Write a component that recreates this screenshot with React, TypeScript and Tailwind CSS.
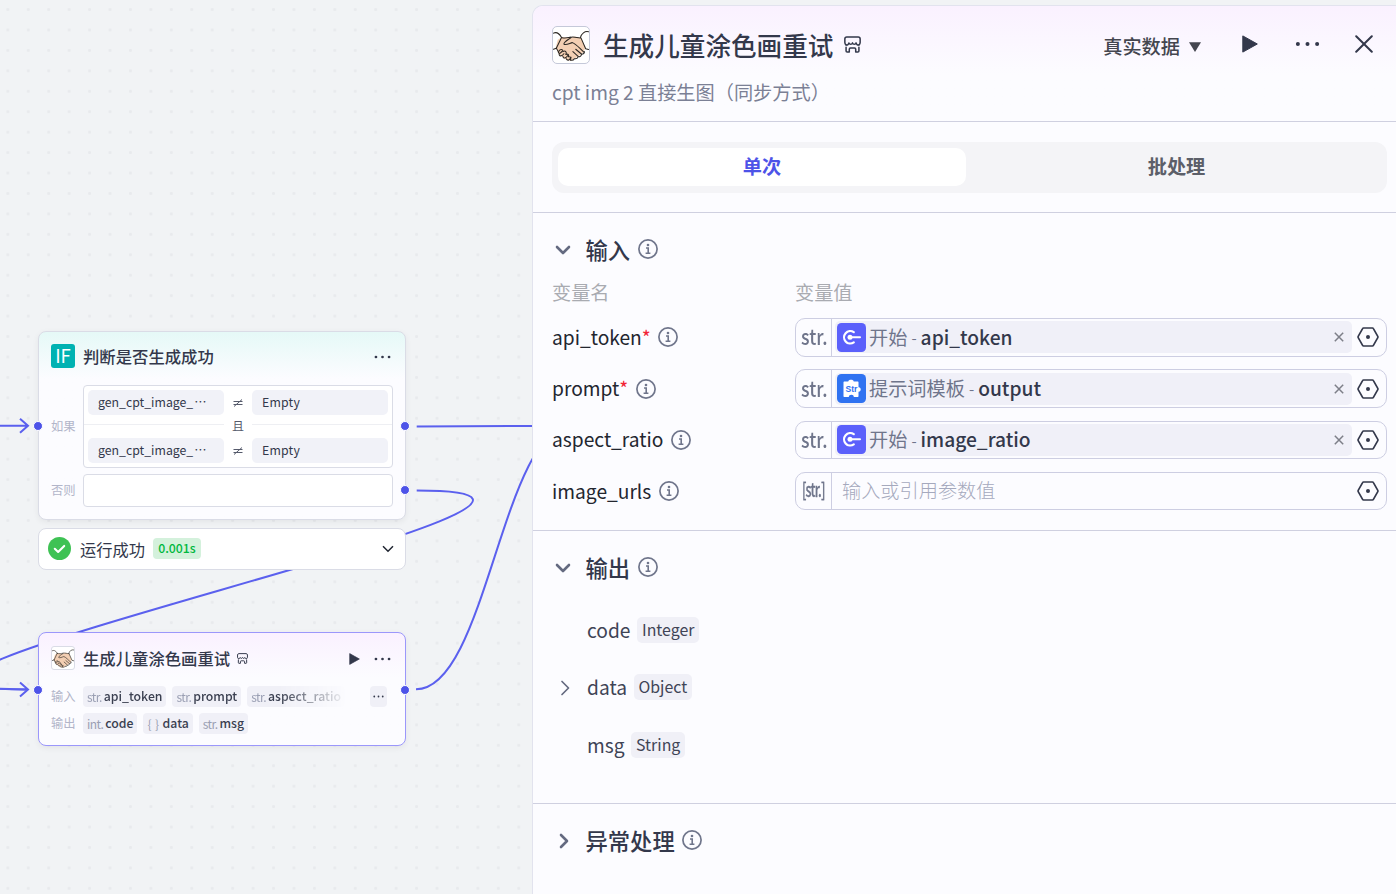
import type { ReactNode } from "react";
import clsx from "clsx";

type Param = {
  name: string;
  type: string;
  required?: boolean;
  source?: "start" | "template";
  sourceLabel?: string;
  field?: string;
};

const params: Param[] = [
  { name: "api_token", type: "str.", required: true, source: "start", sourceLabel: "开始", field: "api_token" },
  { name: "prompt", type: "str.", required: true, source: "template", sourceLabel: "提示词模板", field: "output" },
  { name: "aspect_ratio", type: "str.", source: "start", sourceLabel: "开始", field: "image_ratio" },
  { name: "image_urls", type: "[str.]" },
];

const outputs = [
  { name: "code", type: "Integer" },
  { name: "data", type: "Object", expandable: true },
  { name: "msg", type: "String" },
];

function HandshakeIcon({ className }: { className?: string }) {
  return (
    <svg viewBox="0 0 38 38" className={className} fill="none" strokeLinejoin="round" strokeLinecap="round">
      <path d="M5 13.500 10 10.500l8 1.500 4.500-2 7 1.500 4.500 10-1.500 4.500L26 31.500l-7.500 4-4.500-1-8-6-3-7z" fill="#f3cfb3" />
      <g stroke="#2b2723" strokeWidth="1.100">
        <path d="M.5 6.500c4-2 6.500 1 8.500 4.500M9 11 3.500 22.500l-3 1M37.500 5c-4-1-7.500 2-8.500 6M29.500 11.500l5 11.500 3 .8" />
        <path d="M9 11c4 1.500 7 0 10-.3 4-.8 7 1 10 .8" />
        <path d="M19 11.200c-3 2.300-7.500 4.500-7.500 6.800 2 1.700 6-.8 9-1.500 4 1.500 7 5.500 12 10" />
        <path d="M3.500 22c.5 2 2 3 2.300 5 1.300 1.500 2.700 0 4-1.500M6.500 28c-.3 3 2.500 3.500 5 .2M10.500 31c.5 3 3.500 2 5-.8M14 33.500c1.500 3 4 .8 5-1.500" />
        <path d="M6 26c.8-2.500 4.500-3.500 4.500 0 2.500-1.500 4.500.2 3 3 2-1 4 .3 2.500 2.500 2-.5 3.500.5 2.500 3" />
        <path d="M18.500 35c2 .5 3.500-.5 4-1.500 2 .3 3.500-.5 4-2 2.500 0 3.500-1 3.500-2.700 2.500 0 3.500-1.300 3-3" />
        <path d="m21 26 5.500 5M24 23.500l6 5" />
      </g>
    </svg>
  );
}

function StoreIcon({ className }: { className?: string }) {
  return (
    <svg viewBox="0 0 18 18" className={className} fill="none" stroke="currentColor" strokeWidth="1.600" strokeLinecap="round" strokeLinejoin="round">
      <path d="M2.200 9.500C1.400 9 .9 8.200.9 7V3.200C.9 1.900 1.700 1 3 1h12c1.300 0 2.100.9 2.100 2.200V7c0 1.200-.5 2-1.300 2.500" />
      <path d="M2.200 9.500c1.500.5 2.700-.6 3-2.200.6 2 3.200 2 3.800 0 .6 2 3.200 2 3.800 0 .3 1.600 1.500 2.700 3 2.200" />
      <path d="M2.200 11.800v4c0 .7.400 1.100 1.100 1.100h2.300V14c0-.8.400-1.200 1.200-1.200h4.400c.8 0 1.200.4 1.200 1.200v2.900h2.300c.7 0 1.100-.4 1.100-1.100v-4" />
    </svg>
  );
}

function InfoIcon() {
  return (
    <svg viewBox="0 0 20 20" className="size-5 shrink-0 text-[#6f758b]" fill="none" stroke="currentColor" strokeWidth="1.700">
      <circle cx="10" cy="10" r="9.100" />
      <circle cx="10" cy="6" r="1.300" fill="currentColor" stroke="none" />
      <path d="M8 9h2.200v5M7.600 14.200h4.800" strokeWidth="1.600" />
    </svg>
  );
}

function Chevron({ open, thin }: { open?: boolean; thin?: boolean }) {
  return (
    <svg
      viewBox="0 0 16 16"
      className={clsx("size-4 shrink-0 text-[#646a80]", open && "-mt-[2px] rotate-90", !open && !thin && "-mt-px")}
      fill="none"
      stroke="currentColor"
      strokeWidth={thin ? 1.7 : 2.6}
      strokeLinecap="round"
      strokeLinejoin="round"
    >
      <path d={thin ? "m6 1.500 6.500 6.500L6 14.500" : "m6 2 6 6-6 6"} />
    </svg>
  );
}

function Dots({ className }: { className?: string }) {
  return (
    <svg viewBox="0 0 26 6" className={className} fill="currentColor">
      <circle cx="3" cy="3" r="2.100" />
      <circle cx="13" cy="3" r="2.100" />
      <circle cx="23" cy="3" r="2.100" />
    </svg>
  );
}

function PlayIcon({ className }: { className?: string }) {
  return (
    <svg viewBox="0 0 16 18" className={className} fill="currentColor" stroke="currentColor" strokeLinejoin="round">
      <path d="M.8.9v16.200L15.300 9z" />
    </svg>
  );
}

function HexIcon() {
  return (
    <svg viewBox="0 0 22 20" className="h-5 w-[22px] shrink-0 text-[#33384b]" fill="none" stroke="currentColor" strokeWidth="1.700" strokeLinejoin="round">
      <path d="M6.600 1h8.800c.5 0 .8.200 1 .6l4.400 7.700c.2.500.2.900 0 1.400l-4.400 7.700c-.2.400-.5.600-1 .6H6.600c-.5 0-.8-.2-1-.6L1.200 10.700c-.2-.5-.2-.9 0-1.400l4.400-7.700c.2-.4.5-.6 1-.6Z" />
      <circle cx="11" cy="10" r="2" fill="currentColor" stroke="none" />
    </svg>
  );
}

function SourceIcon({ source }: { source: "start" | "template" }) {
  if (source === "start") {
    return (
      <svg viewBox="0 0 29 29" className="size-[29px] shrink-0" fill="none">
        <rect width="29" height="29" rx="4.500" fill="#5b60fb" />
        <path d="M16.800 9.200a6.200 6.200 0 1 0 0 10.200" stroke="#fff" strokeWidth="2.200" strokeLinecap="round" />
        <path d="M14 14.300h9" stroke="#fff" strokeWidth="2" strokeLinecap="round" />
        <circle cx="13" cy="14.300" r="2.500" fill="#fff" />
      </svg>
    );
  }
  return (
    <svg viewBox="0 0 29 29" className="size-[29px] shrink-0" fill="none">
      <rect width="29" height="29" rx="4.500" fill="#2f72f1" />
      <path
        d="M7.500 7.500h3.800c-.3-2.400 5.700-2.400 5.400 0h3.800c.8 0 1 .3 1 1v4.700c3-.3 3 4.700 0 4.500v4.200c0 .8-.3 1-1 1h-3.700c.2-3-5-3-5 0H7.500c-.7 0-1-.3-1-1V8.500c0-.7.3-1 1-1Z"
        fill="#fff"
      />
      <text x="14.500" y="18.300" textAnchor="middle" fontSize="8.500" fontWeight="700" fontFamily="Liberation Sans, sans-serif" fill="#2f72f1">
        Str
      </text>
    </svg>
  );
}

function Port({ className }: { className: string }) {
  return <span className={clsx("absolute size-[10px] rounded-full border border-white bg-[#4d53e8]", className)} />;
}

function Tag({ type, name }: { type: string; name: string }) {
  return (
    <span className="flex h-[21px] shrink-0 items-center gap-[2px] rounded-[4px] bg-[#f0f0f7] px-1 text-[12.27px] font-medium text-[#3a3f50]">
      <span className="whitespace-pre text-[12px] font-normal tracking-[-0.6px] text-[#9a9fb3]">{type}</span>
      {name}
    </span>
  );
}

function ConditionRow() {
  return (
    <div className="flex h-[25px] items-center text-[12.3px] text-[#33384b]">
      <span className="flex h-full w-[136px] items-center rounded-[5px] bg-[#f1f2f8] pl-[10px]">
        gen_cpt_image_<span className="ml-px">…</span>
      </span>
      <span className="flex w-7 justify-center">
        <svg viewBox="0 0 10 8" className="h-2 w-[10px]" fill="none" stroke="#555a6b" strokeWidth="1">
          <path d="M.5 2.500h9M.5 5.500h9M1 7.500l8-7" />
        </svg>
      </span>
      <span className="flex h-full w-[136px] items-center rounded-[5px] bg-[#f1f2f8] pl-[10px]">
        <span className="tracking-[0.2px]">Empty</span>
      </span>
    </div>
  );
}

function Edges() {
  return (
    <svg width="532" height="894" viewBox="0 0 532 894" className="absolute inset-0" fill="none" stroke="#5b60ee" strokeWidth="2">
      <path d="M0 425.700H27.500M20 418.800l8 7-8 7" />
      <path d="M0 688.700 27.500 689.500M20 682.500l8 7-8 7" />
      <path d="M416.700 426.600 573 425.700" />
      <path d="M416.700 490.500C713 490.500-271 689.500 25 689.500" />
      <path d="M416 689.300C487 689.300 502 425 573 425" />
    </svg>
  );
}

function IfNode() {
  return (
    <div className="absolute left-[38px] top-[331px] w-[368px]">
      <div className="h-[189px] rounded-[8px] border border-[#dadce6] bg-[#fcfcff] bg-linear-to-b from-[#e5f9f7] to-[#fcfcff] to-25% px-3 pt-3 shadow-[0_2px_6px_rgba(0,0,0,0.06)]">
        <div className="flex h-6 items-center">
          <span className="flex size-6 items-center justify-center rounded-[3px] bg-[#00b2b2] text-[18.500px] leading-none text-white">
            <span className="-mt-px">IF</span>
          </span>
          <span className="ml-2 text-[16.35px] font-medium text-[#33384b]">判断是否生成成功</span>
          <Dots className="ml-auto mr-[2px] mt-[2px] h-[4px] w-[17px] text-[#33384b]" />
        </div>
        <div className="mt-[17px] flex items-center">
          <span className="w-8 text-[12.3px] text-[#b2b5c9]">如果</span>
          <div className="h-[83px] w-[310px] rounded-[4px] border border-[#dadce6] bg-white px-1 pt-1">
            <ConditionRow />
            <div className="-mx-1 flex h-[23px] items-center text-[12px] text-[#555a6b]">
              <span className="mb-1 h-px w-[140px] bg-[#eeeff3]" />
              <span className="-mt-px w-7 text-center">且</span>
              <span className="mb-1 h-px grow bg-[#eeeff3]" />
            </div>
            <ConditionRow />
          </div>
        </div>
        <div className="mt-[6px] flex items-center">
          <span className="w-8 text-[12.3px] text-[#b2b5c9]">否则</span>
          <div className="h-[33px] w-[310px] rounded-[4px] border border-[#dadce6] bg-white" />
        </div>
      </div>
      <div className="mt-2 flex h-[42px] items-center rounded-[8px] border border-[#dadce6] bg-white pb-px pl-[9px] pr-[11px]">
        <svg viewBox="0 0 22 22" className="-mt-px size-[23px]" fill="none">
          <circle cx="11" cy="11" r="11" fill="#3ec254" />
          <path d="m6.500 11.300 3.200 3L15.500 8.500" stroke="#fff" strokeWidth="2" strokeLinecap="round" strokeLinejoin="round" />
        </svg>
        <span className="ml-[9px] mt-px text-[16.3px] text-[#33384b]">运行成功</span>
        <span className="-mt-px ml-2 flex h-[21px] items-center rounded-[4px] bg-[#d4f1dc] px-[5px] text-[12.3px] font-medium text-[#00b83e]">0.001s</span>
        <svg viewBox="0 0 12 8" className="ml-auto h-2 w-3 text-[#1f2430]" fill="none" stroke="currentColor" strokeWidth="1.500">
          <path d="m1 1.300 5 5 5-5" />
        </svg>
      </div>
      <Port className="-left-[5px] top-[90px]" />
      <Port className="left-[362px] top-[90px]" />
      <Port className="left-[362px] top-[154px]" />
    </div>
  );
}

function RetryNode() {
  return (
    <div className="absolute left-[38px] top-[632px] h-[114px] w-[368px] rounded-[8px] border border-[#9b97fb] bg-[#fcfcff] bg-linear-to-b from-[#faf1ff] to-[#fcfcff] to-40% px-3 pt-[13px] shadow-[0_2px_6px_rgba(0,0,0,0.06)]">
      <div className="flex h-6 items-center text-[#33384b]">
        <HandshakeIcon className="size-6 rounded-[3px] border border-[#dadce6] bg-white" />
        <span className="ml-2 text-[16.35px] font-medium">生成儿童涂色画重试</span>
        <StoreIcon className="ml-[6.500px] size-[11px]" />
        <PlayIcon className="ml-auto mr-[14px] mt-px h-3 w-[11px]" />
        <Dots className="mr-[2px] mt-[2px] h-[4px] w-[17px]" />
      </div>
      <div className="mt-4 flex h-[21px] items-center">
        <span className="w-8 shrink-0 text-[12.3px] text-[#b2b5c9]">输入</span>
        <div className="flex w-[265px] shrink-0 gap-[6px] overflow-hidden mask-r-from-74% mask-r-to-100%">
          <Tag type="str." name="api_token" />
          <Tag type="str." name="prompt" />
          <Tag type="str." name="aspect_ratio" />
        </div>
        <span className="ml-auto mr-[6px] flex h-[21px] w-[17px] items-center justify-center rounded-[4px] bg-[#f0f0f7] text-[#33384b]">
          <Dots className="h-[3px] w-[11px]" />
        </span>
      </div>
      <div className="mt-[6px] flex h-[21px] items-center">
        <span className="w-8 shrink-0 text-[12.3px] text-[#b2b5c9]">输出</span>
        <div className="flex gap-[6px]">
          <Tag type="int." name="code" />
          <Tag type="{  } " name="data" />
          <Tag type="str." name="msg" />
        </div>
      </div>
      <Port className="-left-[6px] top-[52px]" />
      <Port className="left-[361px] top-[52px]" />
    </div>
  );
}

function SectionTitle({ title, open }: { title: string; open?: boolean }) {
  return (
    <div className="flex h-8 items-center pl-[3px]">
      <Chevron open={open} />
      <h3 className="ml-[14.500px] text-[22.3px] font-medium text-[#33384b]">{title}</h3>
      <span className="-mt-[2px] ml-[7.500px]">
        <InfoIcon />
      </span>
    </div>
  );
}

function Section({ className, children }: { className?: string; children: ReactNode }) {
  return <section className={clsx("border-b border-[#cfd0e0] pl-[19px] pr-[9px]", className)}>{children}</section>;
}

function TypeCell({ type, wide }: { type: string; wide: boolean }) {
  return (
    <span className="flex h-full w-9 shrink-0 items-center justify-center border-r border-[#cdcee2] text-[#6f758b]">
      <span className={clsx("-mt-[3px] font-medium", wide ? "scale-x-[0.66] text-[19px] tracking-[-1.200px] [-webkit-text-stroke:0.3px]" : "ml-px scale-x-[0.81] text-[22px]")}>{type}</span>
    </span>
  );
}

function ParamRow({ param }: { param: Param }) {
  return (
    <div className="flex h-[38.4px] items-center">
      <div className="flex w-[243px] items-center text-[19.2px] text-[#23262f]">
        <span>{param.name}</span>
        {param.required && <span className="text-[#f22435]">*</span>}
        <span className="ml-[7.300px]">
          <InfoIcon />
        </span>
      </div>
      <div className="flex h-full grow items-center rounded-[10px] border border-[#cdcee2] pr-[7px]">
        <TypeCell type={param.type} wide={!param.source} />
        {param.source ? (
          <div className="ml-[3px] flex h-8 grow items-center rounded-[5px] bg-[#f0f0f8] pl-[2px] pr-2 text-[19.2px]">
            <SourceIcon source={param.source} />
            <span className="ml-[3px] text-[#6f758b]">{param.sourceLabel}</span>
            <span className="mx-1 mt-[2px] text-[15px] text-[#6f758b]">-</span>
            <span className="font-medium text-[#33384b]">{param.field}</span>
            <svg viewBox="0 0 10 10" className="ml-auto size-[10px] text-[#7d7f88]" fill="none" stroke="currentColor" strokeWidth="1.500">
              <path d="m.8.8 8.400 8.400M9.200.8.8 9.200" />
            </svg>
          </div>
        ) : (
          <span className="-mt-[2px] ml-[10px] grow text-[19.2px] font-extralight text-[#a5a9bd]">输入或引用参数值</span>
        )}
        <span className="ml-[5px]">
          <HexIcon />
        </span>
      </div>
    </div>
  );
}

function NodePanel() {
  return (
    <aside className="mt-[5px] flex h-[889px] grow flex-col rounded-tl-[11px] border-l border-t border-[#e2e3ee] bg-[#fcfcff]">
      <header className="h-[116px] rounded-tl-[10px] border-b border-[#cfd0e0] bg-linear-to-b from-[#faf1ff] to-[#fcfcff] to-60% pl-[19px] pr-[23px] pt-[19.500px]">
        <div className="flex h-[38px] items-center text-[#33384b]">
          <HandshakeIcon className="size-[38px] rounded-[5px] border border-[#c5c9d9] bg-white" />
          <h2 className="ml-[13px] mt-px text-[25.6px] font-medium">生成儿童涂色画重试</h2>
          <StoreIcon className="ml-[11px] size-[17px]" />
          <div className="ml-auto flex items-center">
            <span className="mt-[3px] text-[19.2px] font-medium text-[#44464f]">真实数据</span>
            <svg viewBox="0 0 12 10" className="ml-[9px] mt-[5px] h-[10px] w-3 text-[#44464f]" fill="currentColor">
              <path d="M0 .3h12L6 10z" />
            </svg>
            <PlayIcon className="ml-[41px] h-[18px] w-4" />
            <Dots className="ml-[37px] h-[6px] w-[25px]" />
            <svg viewBox="0 0 18 18" className="ml-[35px] size-[18px]" fill="none" stroke="currentColor" strokeWidth="2" strokeLinecap="round">
              <path d="m1.200 1.200 15.600 15.600M16.800 1.200 1.200 16.800" />
            </svg>
          </div>
        </div>
        <p className="mt-[14px] text-[19.2px] leading-[29px] text-[#7b8095]">cpt img 2 直接生图（同步方式）</p>
      </header>

      <Section className="h-[91px] pt-5">
        <div className="flex h-[51px] rounded-[12px] bg-[#f4f4f7] p-[6px] text-[19.2px] font-semibold">
          <span className="flex h-[38px] w-[408px] items-center justify-center rounded-[10px] bg-white pb-px text-[#4d53e8]">单次</span>
          <span className="flex h-[38px] grow items-center justify-center pb-px pl-[6px] text-[#5c5f69]">批处理</span>
        </div>
      </Section>

      <Section className="h-[318px] pt-[21px]">
        <SectionTitle title="输入" open />
        <div className="mt-3 flex h-[29px] items-center text-[19.2px] text-[#a9abb1]">
          <span className="w-[243px]">变量名</span>
          <span>变量值</span>
        </div>
        <div className="mt-[11.3px] flex flex-col gap-[12.8px]">
          {params.map((param) => (
            <ParamRow key={param.name} param={param} />
          ))}
        </div>
      </Section>

      <Section className="h-[273px] pt-[21px]">
        <SectionTitle title="输出" open />
        <div className="mt-[17.500px]">
          {outputs.map((output) => (
            <div key={output.name} className="flex h-[57.5px] items-center text-[19.2px] text-[#3f4456]">
              <span className="w-[35px] pl-1">{output.expandable && <Chevron thin />}</span>
              <span>{output.name}</span>
              <span className="mb-px ml-[6.500px] flex h-[25.6px] items-center rounded-[5px] bg-[#f0f0f7] px-[5px] text-[15.9px]">{output.type}</span>
            </div>
          ))}
        </div>
      </Section>

      <section className="pl-[19px] pt-[21px]">
        <SectionTitle title="异常处理" />
      </section>
    </aside>
  );
}

export default function App() {
  return (
    <div className="flex h-[894px] w-[1396px] overflow-hidden bg-[#f1f3f5] font-['Noto_Sans_CJK_SC',sans-serif]">
      <main className="relative w-[532px] shrink-0 overflow-hidden bg-[radial-gradient(circle,#e8eaed_1.200px,transparent_1.800px)] bg-[length:20.45px_20.45px] bg-position-[-2.400px_-0.700px]">
        <Edges />
        <IfNode />
        <RetryNode />
      </main>
      <NodePanel />
    </div>
  );
}
